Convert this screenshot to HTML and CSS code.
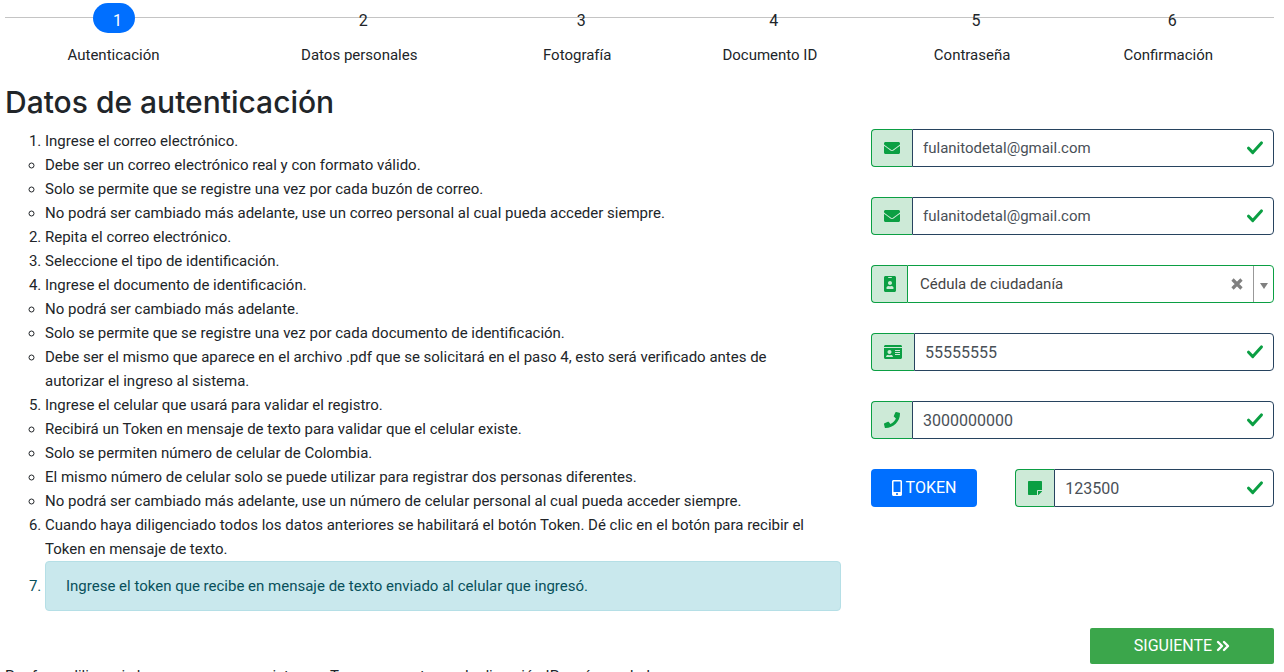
FILE: index.html
```html
<!DOCTYPE html>
<html lang="es">
<head>
<meta charset="utf-8">
<meta name="viewport" content="width=device-width, initial-scale=1">
<title>Datos de autenticación</title>
<link rel="stylesheet" href="styles.css">
</head>
<body>
<svg class="sprite" aria-hidden="true">
  <symbol id="envelope" viewBox="0 0 512 512"><path d="M502.3 190.8c3.9-3.1 9.7-.2 9.7 4.7V400c0 26.5-21.5 48-48 48H48c-26.5 0-48-21.5-48-48V195.6c0-5 5.7-7.8 9.7-4.7 22.4 17.4 52.1 39.5 154.1 113.6 21.1 15.4 56.7 47.8 92.2 47.6 35.7.3 72-32.8 92.3-47.6 102-74.1 131.6-96.3 154-113.7zM256 320c23.2.4 56.6-29.2 73.4-41.4 132.7-96.3 142.8-104.7 173.4-128.7 5.8-4.5 9.2-11.5 9.2-18.9v-19c0-26.5-21.5-48-48-48H48c-26.5 0-48 21.5-48 48v19c0 7.4 3.4 14.3 9.2 18.9 30.6 23.9 40.7 32.4 173.4 128.7 16.8 12.2 50.2 41.8 73.4 41.4z"/></symbol>
  <symbol id="check" viewBox="0 0 16 16"><path d="M1.6 8.2 5.8 12.6 14.4 2.9" fill="none" stroke="currentColor" stroke-width="3" stroke-linecap="round" stroke-linejoin="round"/></symbol>
</svg>

<main class="page">
  <nav class="wizard" aria-label="Pasos">
    <ol class="steps">
      <li class="step"><button class="step-number active" type="button" aria-labelledby="s1">1</button><p class="step-label" id="s1">Autenticación</p></li>
      <li class="step"><button class="step-number" type="button" aria-labelledby="s2">2</button><p class="step-label" id="s2">Datos personales</p></li>
      <li class="step"><button class="step-number" type="button" aria-labelledby="s3">3</button><p class="step-label" id="s3">Fotografía</p></li>
      <li class="step"><button class="step-number" type="button" aria-labelledby="s4">4</button><p class="step-label" id="s4">Documento ID</p></li>
      <li class="step"><button class="step-number" type="button" aria-labelledby="s5">5</button><p class="step-label" id="s5">Contraseña</p></li>
      <li class="step"><button class="step-number" type="button" aria-labelledby="s6">6</button><p class="step-label" id="s6">Confirmación</p></li>
    </ol>
  </nav>

  <h2 class="title">Datos de autenticación</h2>

  <form>
    <div class="columns">
      <ol class="instructions">
        <li>Ingrese el correo electrónico.
          <ul class="notes">
            <li>Debe ser un correo electrónico real y con formato válido.</li>
            <li>Solo se permite que se registre una vez por cada buzón de correo.</li>
            <li>No podrá ser cambiado más adelante, use un correo personal al cual pueda acceder siempre.</li>
          </ul>
        </li>
        <li>Repita el correo electrónico.</li>
        <li>Seleccione el tipo de identificación.</li>
        <li>Ingrese el documento de identificación.
          <ul class="notes">
            <li>No podrá ser cambiado más adelante.</li>
            <li>Solo se permite que se registre una vez por cada documento de identificación.</li>
            <li>Debe ser el mismo que aparece en el archivo .pdf que se solicitará en el paso 4, esto será verificado antes de autorizar el ingreso al sistema.</li>
          </ul>
        </li>
        <li>Ingrese el celular que usará para validar el registro.
          <ul class="notes">
            <li>Recibirá un Token en mensaje de texto para validar que el celular existe.</li>
            <li>Solo se permiten número de celular de Colombia.</li>
            <li>El mismo número de celular solo se puede utilizar para registrar dos personas diferentes.</li>
            <li>No podrá ser cambiado más adelante, use un número de celular personal al cual pueda acceder siempre.</li>
          </ul>
        </li>
        <li>Cuando haya diligenciado todos los datos anteriores se habilitará el botón Token. Dé clic en el botón para recibir el Token en mensaje de texto.</li>
        <li class="alert">Ingrese el token que recibe en mensaje de texto enviado al celular que ingresó.</li>
      </ol>

      <div class="fields">
        <div class="group">
          <label class="addon" for="email" aria-label="Correo electrónico"><svg class="icon w16"><use href="#envelope"/></svg></label>
          <div class="control"><input id="email" type="email" value="fulanitodetal@gmail.com"><svg class="icon w16 valid"><use href="#check"/></svg></div>
        </div>
        <div class="group">
          <label class="addon" for="email2" aria-label="Repita el correo electrónico"><svg class="icon w16"><use href="#envelope"/></svg></label>
          <div class="control"><input id="email2" type="email" value="fulanitodetal@gmail.com"><svg class="icon w16 valid"><use href="#check"/></svg></div>
        </div>
        <div class="group">
          <label class="addon addon-flush" for="idtype" aria-label="Tipo de identificación"><svg class="icon w12" viewBox="0 0 384 512"><path d="M336 0H48C21.5 0 0 21.5 0 48v416c0 26.5 21.5 48 48 48h288c26.5 0 48-21.5 48-48V48c0-26.5-21.5-48-48-48zM144 32h96c8.800 0 16 7.200 16 16s-7.200 16-16 16h-96c-8.800 0-16-7.200-16-16s7.200-16 16-16zm48 128c35.300 0 64 28.700 64 64s-28.700 64-64 64-64-28.700-64-64 28.700-64 64-64zm112 236.800c0 10.600-10 19.200-22.400 19.200H102.400C90 416 80 407.400 80 396.800v-19.200c0-31.800 30.100-57.600 67.200-57.600h5c12.300 5.100 25.700 8 39.800 8s27.600-2.900 39.800-8h5c37.100 0 67.200 25.800 67.200 57.600v19.200z"/></svg></label>
          <div class="control choice">
            <select id="idtype"><option>Cédula de ciudadanía</option></select>
            <button class="clear" type="button" aria-label="Borrar"><svg class="icon w12" viewBox="0 0 12 12"><path d="M1.500 1.500 10.500 10.500M10.500 1.500 1.500 10.500" fill="none" stroke="currentColor" stroke-width="3.200"/></svg></button>
            <span class="arrow" aria-hidden="true"></span>
          </div>
        </div>
        <div class="group">
          <label class="addon" for="idnumber" aria-label="Documento de identificación"><svg class="icon w18" viewBox="0 0 576 512"><path d="M528 32H48C21.500 32 0 53.500 0 80v16h576V80c0-26.500-21.500-48-48-48zM0 432c0 26.500 21.500 48 48 48h480c26.500 0 48-21.500 48-48V128H0v304zm352-232c0-4.400 3.600-8 8-8h144c4.400 0 8 3.600 8 8v16c0 4.400-3.600 8-8 8H360c-4.400 0-8-3.600-8-8v-16zm0 64c0-4.400 3.600-8 8-8h144c4.400 0 8 3.600 8 8v16c0 4.400-3.600 8-8 8H360c-4.400 0-8-3.600-8-8v-16zm0 64c0-4.400 3.600-8 8-8h144c4.400 0 8 3.600 8 8v16c0 4.400-3.600 8-8 8H360c-4.400 0-8-3.600-8-8v-16zM176 192c35.300 0 64 28.700 64 64s-28.700 64-64 64-64-28.700-64-64 28.700-64 64-64zM67.100 396.200C75.500 370.500 99.600 352 128 352h8.200c12.300 5.100 25.700 8 39.800 8s27.600-2.900 39.800-8h8.200c28.400 0 52.500 18.500 60.900 44.200 3.200 9.900-5.200 19.800-15.600 19.800H82.700c-10.400 0-18.800-10-15.600-19.800z"/></svg></label>
          <div class="control"><input class="digits" id="idnumber" type="text" value="55555555"><svg class="icon w16 valid"><use href="#check"/></svg></div>
        </div>
        <div class="group">
          <label class="addon" for="phone" aria-label="Celular"><svg class="icon w16" viewBox="0 0 512 512"><path d="M493.400 24.600l-104-24c-11.300-2.600-22.900 3.300-27.500 13.900l-48 112c-4.200 9.800-1.400 21.300 6.900 28l60.600 49.600c-36 76.700-98.900 140.500-177.200 177.200l-49.600-60.600c-6.800-8.300-18.200-11.100-28-6.900l-112 48C3.900 366.500-2 378.100.6 389.400l24 104C27.100 504.200 36.700 512 48 512c256.100 0 464-207.500 464-464 0-11.200-7.700-20.900-18.600-23.400z"/></svg></label>
          <div class="control"><input class="digits" id="phone" type="tel" value="3000000000"><svg class="icon w16 valid"><use href="#check"/></svg></div>
        </div>
        <div class="token-row">
          <div class="token-action">
            <button class="btn btn-token" type="button"><svg class="icon w10" viewBox="0 0 320 512"><path d="M272 0H48C21.500 0 0 21.500 0 48v416c0 26.500 21.500 48 48 48h224c26.500 0 48-21.500 48-48V48c0-26.500-21.500-48-48-48zM160 480c-17.700 0-32-14.300-32-32s14.300-32 32-32 32 14.300 32 32-14.300 32-32 32zm112-108c0 6.600-5.400 12-12 12H60c-6.600 0-12-5.400-12-12V60c0-6.600 5.400-12 12-12h200c6.600 0 12 5.400 12 12v312z"/></svg>TOKEN</button>
          </div>
          <div class="group token-field">
            <label class="addon" for="token" aria-label="Token"><svg class="icon w14" viewBox="0 0 448 512"><path d="M312 320h136V56c0-13.300-10.700-24-24-24H24C10.700 32 0 42.700 0 56v400c0 13.300 10.700 24 24 24h264V344c0-13.200 10.800-24 24-24zm129 55l-98 98c-4.500 4.500-10.600 7-17 7h-6V352h128v6.100c0 6.300-2.500 12.400-7 16.900z"/></svg></label>
            <div class="control"><input class="digits" id="token" type="text" value="123500"><svg class="icon w16 valid"><use href="#check"/></svg></div>
          </div>
        </div>
      </div>
    </div>

    <div class="actions">
      <button class="btn btn-next" type="submit">SIGUIENTE<svg class="icon w14" viewBox="0 0 14 16"><path d="M2 4l4 4-4 4M8 4l4 4-4 4" fill="none" stroke="currentColor" stroke-width="2.4" stroke-linecap="round" stroke-linejoin="round"/></svg></button>
    </div>
  </form>

  <p class="footnote">Por favor diligencie los campos para registrarse. Tenga presente que la dirección IP será guardada.</p>
</main>
</body>
</html>
```
FILE: styles.css
```css
*, *::before, *::after { box-sizing: border-box; }

html { scrollbar-width: none; }

body {
  margin: 0;
  background: #fff;
  color: #212529;
  font: 15px/24px Roboto, "Liberation Sans", sans-serif;
}

button, input, select { font: inherit; }
button { cursor: pointer; }

.sprite { display: none; }

.page { padding: 3px 10px 0 5px; }

/* Icons */
.icon { display: block; flex: none; height: 16px; fill: currentColor; }
.w10 { width: 10px; }
.w12 { width: 12px; }
.w14 { width: 14px; }
.w16 { width: 16px; }
.w18 { width: 18px; }

/* Step indicator */
.steps {
  display: table;
  width: 100%;
  margin: 0;
  padding: 0;
  list-style: none;
  background: linear-gradient(#c4c4c4, #c4c4c4) 0 14px / 100% 1px no-repeat;
}

.step { display: table-cell; text-align: center; }

.step-number {
  display: block;
  width: 42px;
  height: 30px;
  margin: 0 auto 10px;
  padding: 6px 12px 0 20px;
  border: 0;
  border-radius: 15px;
  background: transparent;
  color: inherit;
  font-size: 16px;
  text-align: center;
}

.step-number.active { background: #006fff; color: #fff; }

.step-label { margin: 0; }

.title {
  margin: 16px 0 8px;
  font-family: Inter, "Liberation Sans", sans-serif;
  font-size: 30px;
  font-weight: 500;
  line-height: 38px;
}

/* Two-column body */
.columns {
  display: grid;
  grid-template-columns: repeat(12, minmax(0, 1fr));
  column-gap: 30px;
}

.instructions {
  grid-column: span 8;
  margin: 0;
  padding-left: 40px;
}

.notes { margin: 0; padding: 0 16px 0 0; list-style: circle; }

.alert {
  padding: 12px 20px;
  border: 1px solid #b5dfe6;
  border-radius: 4px;
  background: #c9e8ed;
  color: #08505b;
}

.fields {
  grid-column: span 4;
  display: grid;
  align-content: start;
  row-gap: 30px;
}

.group { display: flex; height: 38px; }

.addon {
  display: flex;
  align-items: center;
  padding: 0 12px;
  border: 1px solid #0b9f43;
  border-right: 0;
  border-radius: 4px 0 0 4px;
  background: #cdead7;
  color: #0b9f43;
}

.addon-flush { padding-right: 11px; }

.control {
  display: flex;
  flex: 1;
  align-items: center;
  min-width: 0;
  padding-right: 10px;
  border: 1px solid #27435f;
  border-radius: 0 4px 4px 0;
}

.control input {
  flex: 1;
  min-width: 0;
  height: 100%;
  padding: 0 10px;
  border: 0;
  outline: 0;
  background: transparent;
  color: #495057;
}

.control .digits { font-size: 16px; }

.valid { color: #0b9f43; }

.choice { padding-right: 0; border-color: #0b9f43; }

.choice select {
  flex: 1;
  min-width: 0;
  height: 100%;
  padding: 0 12px;
  border: 0;
  outline: 0;
  appearance: none;
  background: transparent;
  color: #444;
}

.clear {
  padding: 0 10px;
  border: 0;
  background: transparent;
  color: #808080;
}

.arrow {
  display: grid;
  place-items: center;
  width: 20px;
  height: 100%;
  border-left: 1px solid #999;
}

.arrow::before {
  content: "";
  margin-top: 4px;
  border: 4px solid transparent;
  border-top: 6px solid #808080;
  border-bottom: 0;
}

.token-row {
  display: grid;
  grid-template-columns: repeat(12, minmax(0, 1fr));
  column-gap: 30px;
}

.token-action { grid-column: span 4; }
.token-field { grid-column: span 8; }

/* Buttons */
.btn {
  display: inline-flex;
  align-items: center;
  justify-content: center;
  gap: 4px;
  border: 0;
  color: #fff;
  font-size: 16px;
}

.btn-token {
  width: 106px;
  height: 38px;
  border-radius: 4px;
  background: #006fff;
}

.actions { display: flex; justify-content: flex-end; margin-top: 17px; }

.btn-next {
  width: 184px;
  height: 36px;
  border-radius: 2px;
  background: #3ba64b;
}

.footnote { margin: 0; }
```
